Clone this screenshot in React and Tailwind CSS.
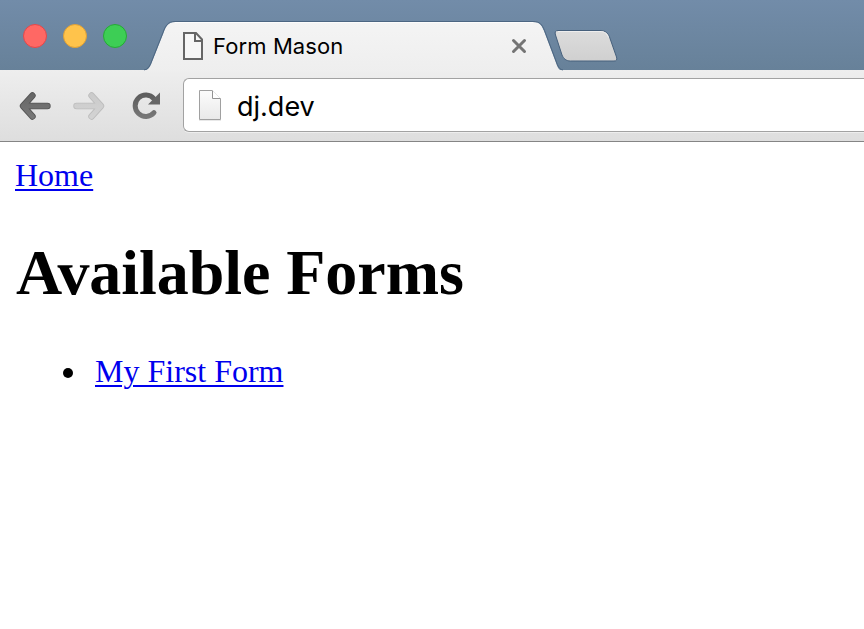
import React from "react";

function TabShape() {
  return (
    <svg className="absolute left-0 top-0" width="424" height="51" viewBox="0 0 424 51" fill="none">
      <defs>
        <linearGradient id="tab" x1="0" y1="0" x2="0" y2="1">
          <stop offset="0" stopColor="#f4f4f4" />
          <stop offset="1" stopColor="#eeeeee" />
        </linearGradient>
      </defs>
      <path
        d="M1 49.500C4 49 5.500 46.500 7 43.500L19.500 12C22 5 24.500 1 31 1H389C395.500 1 397.500 4 400 10L411.500 40.500C413.500 46 414.500 49 418 49.500V51H1Z"
        fill="url(#tab)"
      />
      <path
        d="M0 49C3.500 48.500 5 46 6.500 43L19 11.500C21.500 4.500 24 .5 31 .5H389C396 .5 398 3.500 400.500 9.500L412 40C414 45.500 415.500 48.500 419 49"
        stroke="#46607c"
        strokeOpacity=".85"
      />
      <path d="M31 1.500H389" stroke="#fcfcfc" />
    </svg>
  );
}

function PageIcon() {
  return (
    <svg width="21" height="28" viewBox="0 0 21 28" fill="none" stroke="#666" strokeWidth="2">
      <path d="M1 1H13L19 7.500V27H1Z" fill="#f7f7f7" />
      <path d="M12 1V9H19" />
    </svg>
  );
}

function SiteIcon() {
  return (
    <svg width="24" height="32" viewBox="0 0 24 32" fill="none">
      <defs>
        <linearGradient id="sheet" x1="0" y1="0" x2="0" y2="1">
          <stop offset="0" stopColor="#fcfcfc" />
          <stop offset="1" stopColor="#e9e9e9" />
        </linearGradient>
      </defs>
      <path d="M1 30.500H23" stroke="#e8e8e8" />
      <path d="M1.500 .5H14L22.500 9V29.500H1.500Z" fill="url(#sheet)" stroke="#a0a0a0" />
      <path d="M14.500 .5V8.500H22.500" fill="#fff" stroke="#929292" />
    </svg>
  );
}

function Arrow({ forward = false }) {
  return (
    <svg
      className={forward ? "-scale-x-100" : ""}
      width="32"
      height="28"
      viewBox="0 0 32 28"
      fill="none"
      strokeLinecap="round"
      strokeLinejoin="round"
    >
      <defs>
        <linearGradient id={forward ? "fwd" : "back"} gradientUnits="userSpaceOnUse" x1="0" y1="0" x2="0" y2="28">
          <stop offset="0" stopColor={forward ? "#cacaca" : "#646464"} />
          <stop offset="1" stopColor={forward ? "#d4d4d4" : "#7a7a7a"} />
        </linearGradient>
      </defs>
      <path d="M13.500 3.500L4 14L13.500 24.500M5 14H28.500" stroke={forward ? "#bdbdbd" : "#555"} strokeWidth="6.400" />
      <path d="M13.500 3.500L4 14L13.500 24.500M5 14H28.500" stroke={forward ? "url(#fwd)" : "url(#back)"} strokeWidth="4.800" />
    </svg>
  );
}

function Reload() {
  return (
    <svg width="30" height="28" viewBox="0 0 30 28" fill="none">
      <defs>
        <linearGradient id="reload" x1="0" y1="0" x2="0" y2="1">
          <stop offset="0" stopColor="#5d5d5d" />
          <stop offset="1" stopColor="#777" />
        </linearGradient>
      </defs>
      <path d="M22 20.700A10.700 10.700 0 1 1 22 6.800" stroke="url(#reload)" strokeWidth="5" strokeLinecap="round" />
      <path d="M28 .5V12.500H16Z" fill="#666" />
    </svg>
  );
}

function NewTab() {
  return (
    <svg width="64" height="34" viewBox="0 0 64 34" fill="none">
      <defs>
        <linearGradient id="newtab" x1="0" y1="0" x2="0" y2="1">
          <stop offset="0" stopColor="#dcdcdc" />
          <stop offset="1" stopColor="#d0d0d0" />
        </linearGradient>
      </defs>
      <path
        d="M4 1.500H46C51.500 1.500 54 4 55.500 8L62.500 28C63.300 31 62.500 32 60 32H16.500C12 32 9.500 29.500 8 26L1.500 6C.5 3 1.500 1.500 4 1.500Z"
        fill="url(#newtab)"
        stroke="#46607c"
      />
      <path d="M4 2.500H46C51 2.500 53 5 54.500 8.500" stroke="#eee" />
    </svg>
  );
}

export default function App() {
  return (
    <div className="h-[629px] w-[864px] overflow-hidden bg-white font-['Liberation_Serif',serif]">
      <header className="font-['Inter',sans-serif] text-black">
        <div className="flex h-[70px] bg-linear-to-b from-[#728ca9] to-[#678199]">
          <div className="flex w-[145px] shrink-0 gap-4 pl-[23px] pt-6">
            <span className="size-6 rounded-full border border-[#e2474a] bg-[#ff6864]" />
            <span className="size-6 rounded-full border border-[#dfa035] bg-[#ffc34b]" />
            <span className="size-6 rounded-full border border-[#26aa35] bg-[#3dce55]" />
          </div>
          <div className="relative mt-[21px] h-[51px] w-[409px] shrink-0">
            <div className="absolute -left-px top-0">
              <TabShape />
            </div>
            <div className="relative flex h-[50px] items-center pl-[38px]">
              <PageIcon />
              <span className="ml-[9px] w-[298px] whitespace-nowrap text-[22px] tracking-[0.1px]">Form Mason</span>
              <svg width="16" height="16" viewBox="0 0 16 16" stroke="#747474" strokeWidth="3" strokeLinecap="round">
                <path d="M2.500 2.500L13.500 13.500M13.500 2.500L2.500 13.500" />
              </svg>
            </div>
          </div>
          <div className="pt-[29px]">
            <NewTab />
          </div>
        </div>
        <div className="flex h-[72px] border-b border-[#858585] bg-linear-to-b from-[#eeeeee] to-[#dedede] pl-[18px] pt-2">
          <div className="flex w-[165px] shrink-0 pl-px pt-[14px]">
            <Arrow />
            <div className="ml-[22px]">
              <Arrow forward />
            </div>
            <div className="ml-[27px]">
              <Reload />
            </div>
          </div>
          <div className="flex h-[54px] grow items-center rounded-l-[6px] border border-r-0 border-[#a2a2a2] bg-white pl-[14px] pt-[2px] shadow-[0_1px_0_#eeeeee]">
            <SiteIcon />
            <span className="ml-[15px] pt-px text-[27px] leading-8">dj.dev</span>
          </div>
        </div>
      </header>
      <main className="px-[15px] pt-[15px] text-[32px] leading-9 text-black">
        <a className="block w-fit text-[#0000ee] underline decoration-2 underline-offset-[3px]">Home</a>
        <h1 className="mt-[44px] whitespace-nowrap pl-px text-[64px] font-bold leading-[72px] tracking-[-0.05px]">Available Forms</h1>
        <ul className="mt-[44px] pl-20">
          <li className="flex items-center">
            <span className="-ml-8 mr-[22px] mt-[3px] size-[10px] rounded-full bg-black" />
            <a className="text-[#0000ee] underline decoration-2 underline-offset-[3px]">My First Form</a>
          </li>
        </ul>
      </main>
    </div>
  );
}
